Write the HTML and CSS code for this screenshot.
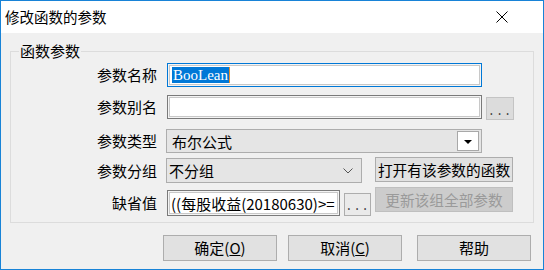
FILE: index.html
```html
<!DOCTYPE html>
<html lang="zh">
<head>
  <meta charset="UTF-8" />
  <title>修改函数的参数</title>
  <link rel="stylesheet" href="styles.css">
</head>
<body>

  <div class="dialog">
    <!-- Title bar -->
    <div class="titlebar">
      <span class="title">修改函数的参数</span>
      <svg class="close" width="12" height="12" viewBox="0 0 12 12">
        <path d="M0.5 0.5 L11.5 11.5 M11.5 0.5 L0.5 11.5" stroke="#000" stroke-width="1" fill="none" />
      </svg>
    </div>

    <div class="content">
      <fieldset class="group">
        <legend>函数参数</legend>

        <div class="row row1">
          <label class="lbl">参数名称</label>
          <div class="edit focus"><span class="sel">BooLean</span></div>
        </div>

        <div class="row row2">
          <label class="lbl">参数别名</label>
          <div class="edit"></div>
          <button class="dots dots-a">...</button>
        </div>

        <div class="row row3">
          <label class="lbl">参数类型</label>
          <div class="combo combo-type">
            <span>布尔公式</span>
            <span class="drop"><i class="tri"></i></span>
          </div>
        </div>

        <div class="row row4">
          <label class="lbl">参数分组</label>
          <div class="combo combo-group">
            <span>不分组</span>
            <svg class="chev" width="10" height="6" viewBox="0 0 10 6">
              <polyline points="0.5,0.5 5,5 9.5,0.5" stroke="#555" stroke-width="1" fill="none" />
            </svg>
          </div>
          <button class="btn wide">打开有该参数的函数</button>
        </div>

        <div class="row row5">
          <label class="lbl">缺省值</label>
          <div class="edit value">((每股收益(20180630)&gt;=</div>
          <button class="dots dots-b">...</button>
          <button class="btn wide" disabled>更新该组全部参数</button>
        </div>
      </fieldset>

      <div class="actions">
        <button class="btn ok">确定(<u>O</u>)</button>
        <button class="btn cancel">取消(<u>C</u>)</button>
        <button class="btn help">帮助</button>
      </div>
    </div>
  </div>

</body>
</html>
```

FILE: styles.css
```css
* {
  margin: 0; padding: 0;
  box-sizing: border-box;
}
body {
  width: 544px;
  height: 270px;
  overflow: hidden;
  background: #fff;
  font-family: "Noto Sans CJK SC", sans-serif;
  font-size: 15px;
  color: #000;
}
.dialog {
  width: 544px;
  height: 270px;
  border: 1px solid #1883d7;
  background: #f0f0f0;
  display: flex;
  flex-direction: column;
}
.titlebar {
  height: 32px;
  background: #fff;
  display: flex;
  align-items: center;
  justify-content: space-between;
  padding: 0 35px 0 4px;
}
.title {
  font-size: 14.5px;
  line-height: 18px;
}
.content {
  padding: 10px 9px 0 9px;
}
.group {
  border: 1px solid #dcdcdc;
  padding: 0 0 6px 0;
}
.group legend {
  margin-left: 8px;
  padding: 0 1px;
  font-size: 15px;
  line-height: 16px;
}
.row {
  display: flex;
  align-items: flex-start;
}
.lbl {
  flex: none;
  width: 146px;
  margin-right: 9px;
  text-align: right;
}
.edit {
  flex: none;
  margin-left: 1px;
  background: #fff;
  border: 1px solid #7a7a7a;
  box-shadow: inset 0 0 0 1px #f4f4f4, inset 0 0 0 2px #c8c8c8;
  display: flex;
  align-items: center;
  overflow: hidden;
  white-space: nowrap;
}
.edit.focus {
  border-color: #0078d7;
}
.sel {
  margin-left: 4px;
  padding: 0 1px;
  background: #0078d7;
  color: #fff;
  font-family: "Liberation Serif", serif;
  font-size: 15px;
  line-height: 16px;
  border-right: 1px solid #e8902c;
}
.combo {
  flex: none;
  display: flex;
  align-items: center;
  background: #e5e5e5;
  border: 1px solid #adadad;
  white-space: nowrap;
}
.drop {
  margin-left: auto;
  margin-right: 2px;
  width: 22px;
  height: 20px;
  background: #fff;
  border: 1px solid #a8a8a8;
  display: flex;
  align-items: center;
  justify-content: center;
}
.tri {
  width: 0;
  height: 0;
  border-left: 4px solid transparent;
  border-right: 4px solid transparent;
  border-top: 4px solid #000;
  margin-top: 1px;
}
.chev {
  margin-left: auto;
  margin-right: 8px;
}
button {
  font-family: "Noto Sans CJK SC", sans-serif;
  font-size: 15px;
  color: #000;
  background: #e1e1e1;
  border: 1px solid #adadad;
  flex: none;
}
.btn {
  height: 26px;
  line-height: 22px;
  white-space: nowrap;
}
.btn:disabled {
  background: #cccccc;
  border-color: #bfbfbf;
  color: #9a9a9a;
}
.wide {
  width: 138px;
  height: 25px;
  font-size: 14.7px;
  padding: 0;
}
.dots {
  font-family: "Liberation Mono", monospace;
  font-size: 12px;
  letter-spacing: 1px;
  color: #444;
  line-height: 14px;
  padding-top: 6px;
}

/* rows */
.row1 { margin-top: 4px; height: 24px; }
.row1 .lbl { line-height: 24px; }
.row1 .edit { width: 315px; height: 24px; }

.row2 { margin-top: 8px; height: 24px; }
.row2 .lbl { line-height: 24px; }
.row2 .edit { width: 315px; height: 24px; }
.dots-a {
  margin: 2px 0 0 4px;
  width: 28px;
  height: 23px;
  background: #dcdcdc;
  border-color: #c4c4c4;
}

.row3 { margin-top: 10px; height: 24px; }
.row3 .lbl { line-height: 24px; }
.combo-type {
  width: 316px;
  height: 24px;
  padding-left: 5px;
}

.row4 { margin-top: 4px; height: 26px; }
.row4 .lbl { line-height: 25px; margin-top: 1px; }
.combo-group {
  margin-top: 1px;
  width: 196px;
  height: 25px;
  padding-left: 2px;
}
.row4 .wide { margin-left: 13px; }

.row5 { margin-top: 4px; height: 29px; }
.row5 .lbl { line-height: 26px; margin-top: 3px; }
.value {
  margin-top: 3px;
  width: 173px;
  height: 26px;
  padding-left: 3px;
}
.dots-b {
  margin: 6px 0 0 4px;
  width: 27px;
  height: 23px;
  background: #eaeaea;
  border-color: #adadad;
  padding-top: 5px;
}
.row5 .wide { margin-left: 4px; }

/* bottom buttons */
.actions {
  display: flex;
  justify-content: flex-end;
  margin-top: 12px;
  padding-right: 3px;
}
.actions .btn {
  width: 114px;
}
.cancel { margin-left: 11px; }
.help { margin-left: 15px; }
```
